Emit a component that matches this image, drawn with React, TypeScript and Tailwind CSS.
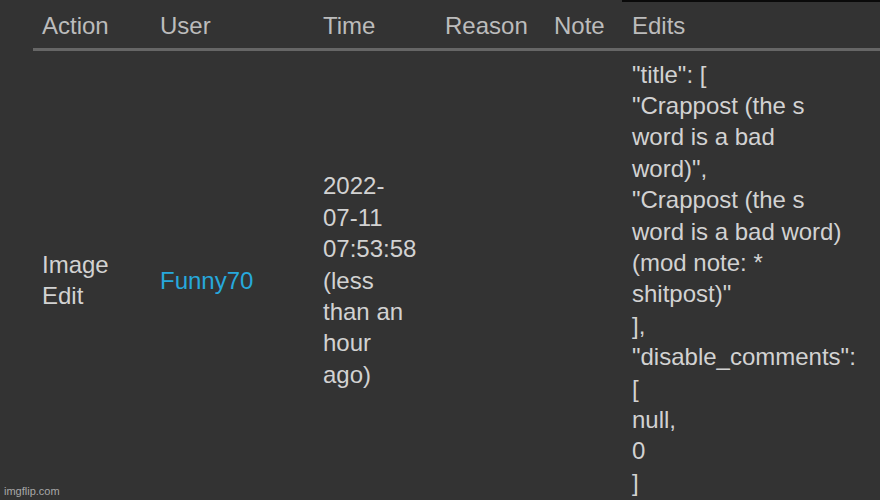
import React from "react";

const L = ({ lines }: { lines: string[] }) => (
  <div>
    {lines.map((t, i) => (
      <div key={i} className="whitespace-pre">{t}</div>
    ))}
  </div>
);

export default function App() {
  const font = { fontFamily: '"Liberation Sans", Arial, sans-serif' };
  return (
    <div className="relative w-[880px] h-[500px] overflow-hidden bg-[#333333]" style={font}>
      <div className="absolute top-0 left-[622px] w-[258px] h-[2px] bg-[#0a0a0a]" />
      <table className="ml-[33px] border-collapse text-[24px] leading-[31.4px]">
        <thead>
          <tr className="text-[#bcbcbc] text-left">
            <th className="font-normal w-[118px] h-[49px] pt-[4px] pl-[9px] border-b-[3px] border-[#666666] align-middle">Action</th>
            <th className="font-normal w-[163px] pt-[4px] pl-[9px] border-b-[3px] border-[#666666] align-middle">User</th>
            <th className="font-normal w-[122px] pt-[4px] pl-[9px] border-b-[3px] border-[#666666] align-middle">Time</th>
            <th className="font-normal w-[109px] pt-[4px] pl-[9px] border-b-[3px] border-[#666666] align-middle">Reason</th>
            <th className="font-normal w-[78px] pt-[4px] pl-[9px] border-b-[3px] border-[#666666] align-middle">Note</th>
            <th className="font-normal w-[257px] pt-[4px] pl-[9px] border-b-[3px] border-[#666666] align-middle">Edits</th>
          </tr>
        </thead>
        <tbody>
          <tr className="text-[#d2d2d2]">
            <td className="pl-[9px] align-middle">
              <L lines={["Image", "Edit"]} />
            </td>
            <td className="pl-[9px] align-middle text-[#27a8dc]">Funny70</td>
            <td className="pl-[9px] align-middle">
              <L lines={["2022-", "07-11", "07:53:58", "(less", "than an", "hour", "ago)"]} />
            </td>
            <td className="pl-[9px]" />
            <td className="pl-[9px]" />
            <td className="pl-[9px] pt-[8px] pb-[12px] align-top">
              <L
                lines={[
                  '"title": [',
                  '"Crappost (the s',
                  "word is a bad",
                  'word)",',
                  '"Crappost (the s',
                  "word is a bad word)",
                  "(mod note: *",
                  'shitpost)"',
                  "],",
                  '"disable_comments":',
                  "[",
                  "null,",
                  "0",
                  "]",
                ]}
              />
            </td>
          </tr>
        </tbody>
      </table>
      <div className="absolute left-[4px] top-[484px] text-[11px] leading-[14px] text-[#a8a8a8]">imgflip.com</div>
    </div>
  );
}
